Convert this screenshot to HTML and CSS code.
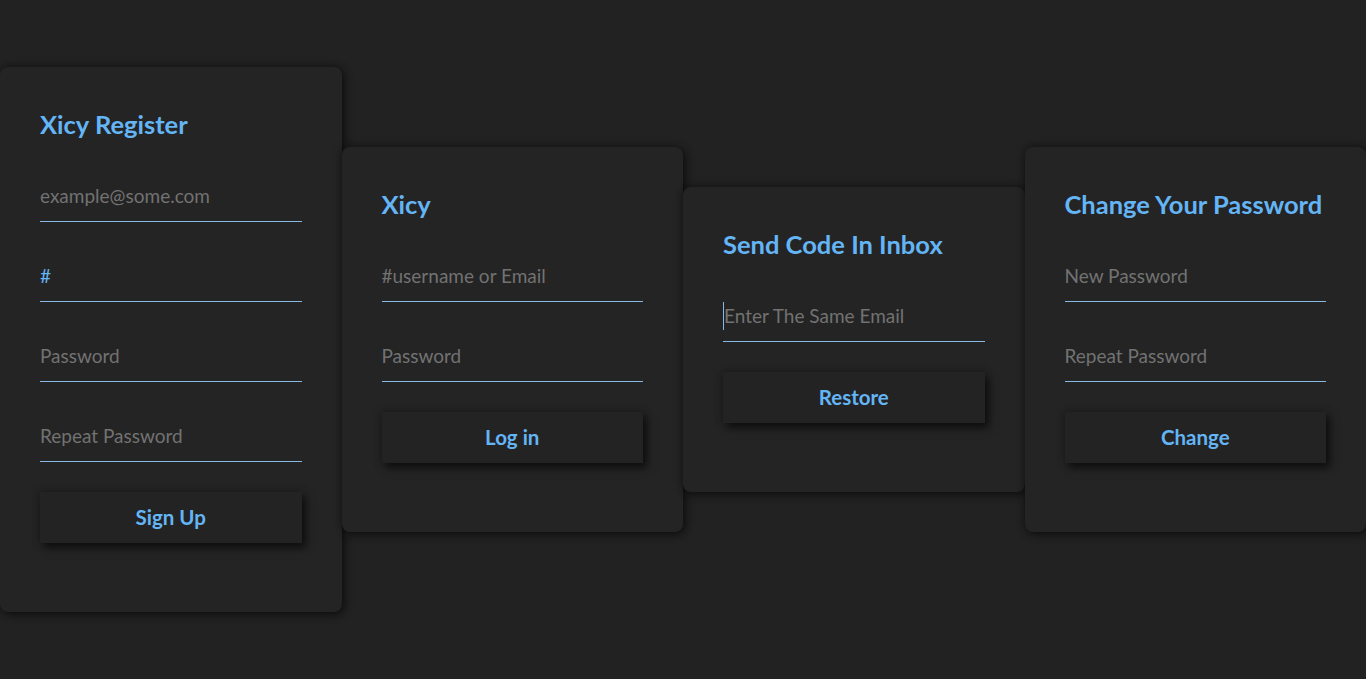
FILE: index.html
```html
<!DOCTYPE html>
<html lang="en">
<head>
<meta charset="utf-8">
<title>Xicy</title>
<link rel="stylesheet" href="styles.css">
</head>
<body>
<main class="row">
  <form class="card">
    <h2 class="title">Xicy Register</h2>
    <input class="field" type="email" placeholder="example@some.com">
    <input class="field filled" type="text" value="#">
    <input class="field" type="password" placeholder="Password">
    <input class="field" type="password" placeholder="Repeat Password">
    <button class="btn" type="button">Sign Up</button>
  </form>
  <form class="card">
    <h2 class="title">Xicy</h2>
    <input class="field" type="text" placeholder="#username or Email">
    <input class="field" type="password" placeholder="Password">
    <button class="btn" type="button">Log in</button>
  </form>
  <form class="card">
    <h2 class="title">Send Code In Inbox</h2>
    <div class="field caret-field"><span class="caret"></span><span class="ph">Enter The Same Email</span></div>
    <button class="btn" type="button">Restore</button>
  </form>
  <form class="card">
    <h2 class="title">Change Your Password</h2>
    <input class="field" type="password" placeholder="New Password">
    <input class="field" type="password" placeholder="Repeat Password">
    <button class="btn" type="button">Change</button>
  </form>
</main>
</body>
</html>
```

FILE: styles.css
```css
* { box-sizing: border-box; }
html, body { margin: 0; padding: 0; }
body {
  background: #222222;
  font-family: "Lato", "Open Sans", sans-serif;
  height: 679px;
  overflow: hidden;
}
.row {
  display: flex;
  align-items: center;
  height: 679px;
}
.card {
  flex: 1 1 0;
  display: flex;
  flex-direction: column;
  background: #242424;
  border-radius: 8px;
  padding: 40px 40px 69px;
  box-shadow: 0 0 8px rgba(0,0,0,0.45), 3px 3px 8px rgba(0,0,0,0.35);
}
.title {
  margin: 0;
  font-size: 25.5px;
  line-height: 35px;
  font-weight: 700;
  color: #64b5f6;
  white-space: nowrap;
}
.field {
  display: block;
  width: 100%;
  height: 50px;
  margin-top: 30px;
  padding: 0 0 2px;
  background: transparent;
  border: none;
  border-bottom: 1px solid #88b9e4;
  color: #64b5f6;
  font-family: inherit;
  font-size: 19px;
  outline: none;
}
.field::placeholder { color: #727272; }
.caret-field {
  display: flex;
  align-items: center;
}
.caret {
  width: 1px;
  height: 28px;
  background: #88b9e4;
}
.ph { color: #727272; font-size: 19px; }
.btn {
  margin-top: 30px;
  height: 51px;
  width: 100%;
  border: none;
  padding: 0 0 2px;
  background: #232323;
  color: #64b5f6;
  font-family: inherit;
  font-size: 20.5px;
  font-weight: 700;
  box-shadow: 0 0 8px rgba(0,0,0,0.3), 4px 5px 8px rgba(0,0,0,0.55);
  cursor: pointer;
}
```
